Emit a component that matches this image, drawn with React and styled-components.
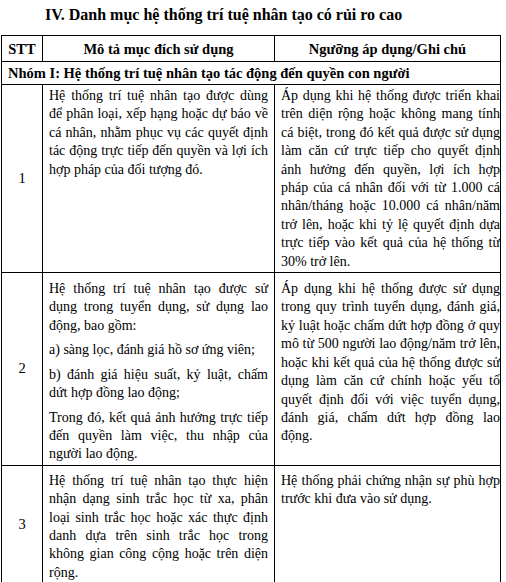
import React from 'react';
import styled, { createGlobalStyle } from 'styled-components';

const GlobalStyle = createGlobalStyle`
  html, body {
    margin: 0;
    padding: 0;
    background: #ffffff;
  }
  body {
    font-family: "Liberation Serif", "Times New Roman", serif;
    color: #000000;
  }
`;

const Page = styled.div`
  padding: 5px 6px 0 1px;
`;

const Heading = styled.h2`
  margin: 0 0 10px;
  padding-left: 44px;
  font-size: 16px;
  font-weight: 700;
  line-height: 20px;
`;

const Table = styled.table`
  width: 499px;
  border-collapse: collapse;
  table-layout: fixed;
  font-size: 14px;
`;

const HeadCell = styled.th`
  border: 1px solid #000;
  padding: 3px 6px 2px;
  font-weight: 700;
  font-size: 14.5px;
  line-height: 20px;
  text-align: center;
`;

const GroupCell = styled.td`
  border: 1px solid #000;
  padding: 1px 6px 1px;
  font-weight: 700;
  font-size: 14.5px;
  line-height: 20px;
  text-align: left;
`;

const NumCell = styled.td`
  border: 1px solid #000;
  font-size: 14.5px;
  text-align: center;
  vertical-align: middle;
`;

const TextCell = styled.td`
  border: 1px solid #000;
  padding: ${(p) => p.$top}px ${(p) => p.$right}px 1px 6px;
  vertical-align: top;
  text-align: justify;
  line-height: 18.4px;
`;

const Para = styled.p`
  margin: 0;
  & + & {
    margin-top: 6px;
  }
`;

const rows = [
  {
    no: '1',
    top: 2,
    desc: [
      'Hệ thống trí tuệ nhân tạo được dùng để phân loại, xếp hạng hoặc dự báo về cá nhân, nhằm phục vụ các quyết định tác động trực tiếp đến quyền và lợi ích hợp pháp của đối tượng đó.',
    ],
    note: [
      'Áp dụng khi hệ thống được triển khai trên diện rộng hoặc không mang tính cá biệt, trong đó kết quả được sử dụng làm căn cứ trực tiếp cho quyết định ảnh hưởng đến quyền, lợi ích hợp pháp của cá nhân đối với từ 1.000 cá nhân/tháng hoặc 10.000 cá nhân/năm trở lên, hoặc khi tỷ lệ quyết định dựa trực tiếp vào kết quả của hệ thống từ 30% trở lên.',
    ],
  },
  {
    no: '2',
    top: 7,
    desc: [
      'Hệ thống trí tuệ nhân tạo được sử dụng trong tuyển dụng, sử dụng lao động, bao gồm:',
      'a) sàng lọc, đánh giá hồ sơ ứng viên;',
      'b) đánh giá hiệu suất, kỷ luật, chấm dứt hợp đồng lao động;',
      'Trong đó, kết quả ảnh hưởng trực tiếp đến quyền làm việc, thu nhập của người lao động.',
    ],
    note: [
      'Áp dụng khi hệ thống được sử dụng trong quy trình tuyển dụng, đánh giá, kỷ luật hoặc chấm dứt hợp đồng ở quy mô từ 500 người lao động/năm trở lên, hoặc khi kết quả của hệ thống được sử dụng làm căn cứ chính hoặc yếu tố quyết định đối với việc tuyển dụng, đánh giá, chấm dứt hợp đồng lao động.',
    ],
  },
  {
    no: '3',
    top: 6,
    desc: [
      'Hệ thống trí tuệ nhân tạo thực hiện nhận dạng sinh trắc học từ xa, phân loại sinh trắc học hoặc xác thực định danh dựa trên sinh trắc học trong không gian công cộng hoặc trên diện rộng.',
    ],
    note: ['Hệ thống phải chứng nhận sự phù hợp trước khi đưa vào sử dụng.'],
  },
];

export default function App() {
  return (
    <Page>
      <GlobalStyle />
      <Heading>IV. Danh mục hệ thống trí tuệ nhân tạo có rủi ro cao</Heading>
      <Table>
        <colgroup>
          <col style={{ width: 41 }} />
          <col style={{ width: 232 }} />
          <col style={{ width: 226 }} />
        </colgroup>
        <thead>
          <tr>
            <HeadCell>STT</HeadCell>
            <HeadCell>Mô tả mục đích sử dụng</HeadCell>
            <HeadCell>Ngưỡng áp dụng/Ghi chú</HeadCell>
          </tr>
        </thead>
        <tbody>
          <tr>
            <GroupCell colSpan={3}>
              Nhóm I: Hệ thống trí tuệ nhân tạo tác động đến quyền con người
            </GroupCell>
          </tr>
          {rows.map((row) => (
            <tr key={row.no}>
              <NumCell>{row.no}</NumCell>
              <TextCell $top={row.top} $right={6}>
                {row.desc.map((t, i) => (
                  <Para key={i}>{t}</Para>
                ))}
              </TextCell>
              <TextCell $top={row.top} $right={0}>
                {row.note.map((t, i) => (
                  <Para key={i}>{t}</Para>
                ))}
              </TextCell>
            </tr>
          ))}
          <tr>
            <GroupCell colSpan={3}>
              Nhóm II: Hệ thống trí tuệ nhân tạo trong lĩnh vực thiết yếu
            </GroupCell>
          </tr>
        </tbody>
      </Table>
    </Page>
  );
}
